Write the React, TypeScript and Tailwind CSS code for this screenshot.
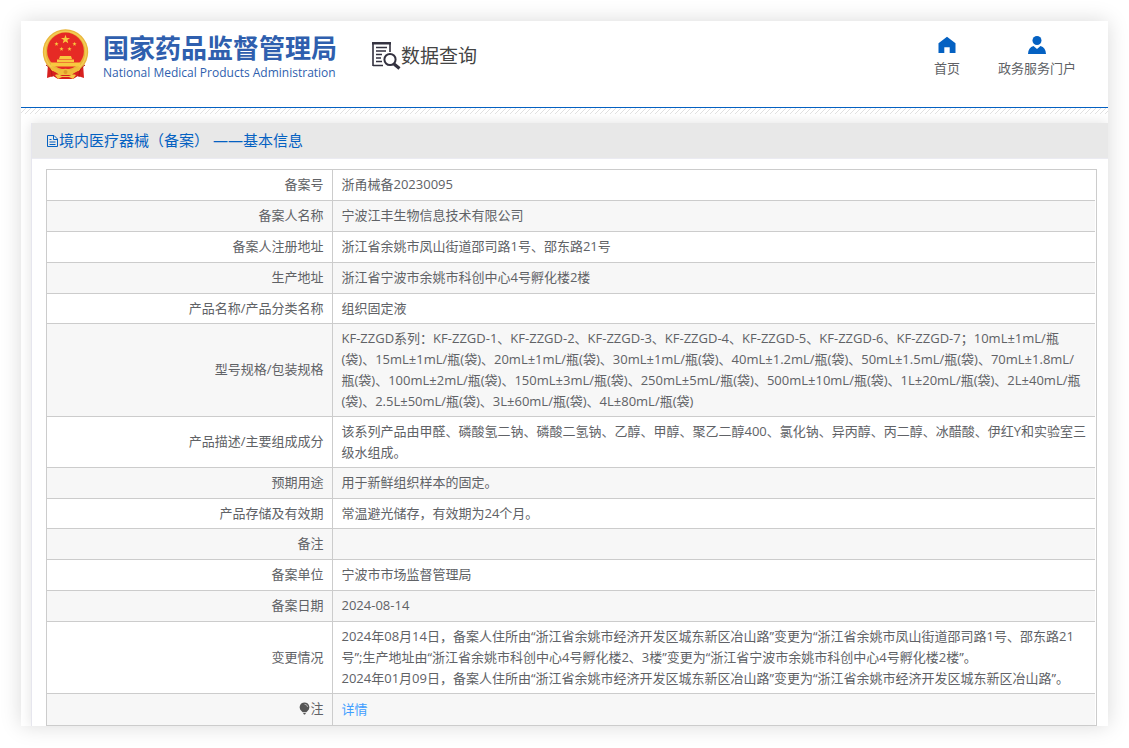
import type { ReactNode } from 'react'

type Row = {
  label: ReactNode
  lines: ReactNode[]
}

const rows: Row[] = [
  { label: '备案号', lines: ['浙甬械备20230095'] },
  { label: '备案人名称', lines: ['宁波江丰生物信息技术有限公司'] },
  { label: '备案人注册地址', lines: ['浙江省余姚市凤山街道邵司路1号、邵东路21号'] },
  { label: '生产地址', lines: ['浙江省宁波市余姚市科创中心4号孵化楼2楼'] },
  { label: '产品名称/产品分类名称', lines: ['组织固定液'] },
  {
    label: '型号规格/包装规格',
    lines: [
      'KF-ZZGD系列：KF-ZZGD-1、KF-ZZGD-2、KF-ZZGD-3、KF-ZZGD-4、KF-ZZGD-5、KF-ZZGD-6、KF-ZZGD-7；10mL±1mL/瓶',
      '(袋)、15mL±1mL/瓶(袋)、20mL±1mL/瓶(袋)、30mL±1mL/瓶(袋)、40mL±1.2mL/瓶(袋)、50mL±1.5mL/瓶(袋)、70mL±1.8mL/',
      '瓶(袋)、100mL±2mL/瓶(袋)、150mL±3mL/瓶(袋)、250mL±5mL/瓶(袋)、500mL±10mL/瓶(袋)、1L±20mL/瓶(袋)、2L±40mL/瓶',
      '(袋)、2.5L±50mL/瓶(袋)、3L±60mL/瓶(袋)、4L±80mL/瓶(袋)',
    ],
  },
  {
    label: '产品描述/主要组成成分',
    lines: [
      '该系列产品由甲醛、磷酸氢二钠、磷酸二氢钠、乙醇、甲醇、聚乙二醇400、氯化钠、异丙醇、丙二醇、冰醋酸、伊红Y和实验室三级水组成。',
    ],
  },
  { label: '预期用途', lines: ['用于新鲜组织样本的固定。'] },
  { label: '产品存储及有效期', lines: ['常温避光储存，有效期为24个月。'] },
  { label: '备注', lines: [''] },
  { label: '备案单位', lines: ['宁波市市场监督管理局'] },
  { label: '备案日期', lines: ['2024-08-14'] },
  {
    label: '变更情况',
    lines: [
      '2024年08月14日，备案人住所由“浙江省余姚市经济开发区城东新区冶山路”变更为“浙江省余姚市凤山街道邵司路1号、邵东路21',
      '号”;生产地址由“浙江省余姚市科创中心4号孵化楼2、3楼”变更为“浙江省宁波市余姚市科创中心4号孵化楼2楼”。',
      '2024年01月09日，备案人住所由“浙江省余姚市经济开发区城东新区冶山路”变更为“浙江省余姚市经济开发区城东新区冶山路”。',
    ],
  },
  {
    label: (
      <span className="inline-flex items-center">
        <NoteIcon />注
      </span>
    ),
    lines: [
      <a key="detail" href="#detail" className="text-[#409eff]">
        详情
      </a>,
    ],
  },
]

function Emblem() {
  const star = 'M0-5 1.2-1.6 4.8-1.5 1.9.6 2.9 4 0 2-2.9 4-1.9.6-4.8-1.5-1.2-1.6Z'
  return (
    <svg className="h-[51px] w-[47px] shrink-0" viewBox="0 0 47 51" aria-hidden="true">
      <path d="M6 35 5 49l6-2 5 3h15l5-3 6 2-1-14Z" fill="#d7201f" />
      <circle cx="23.5" cy="23" r="22.7" fill="#e9b53a" />
      <circle cx="23.5" cy="23" r="20.6" fill="none" stroke="#f3cb55" strokeWidth="1.6" />
      <circle cx="23.5" cy="22" r="18.4" fill="#e62a25" />
      <g fill="#f8c93f">
        <path d={star} transform="translate(23.5 10.5) scale(.95)" />
        <path d={star} transform="translate(14.5 15) scale(.45)" />
        <path d={star} transform="translate(32.5 15) scale(.45)" />
        <path d={star} transform="translate(19.5 20) scale(.45)" />
        <path d={star} transform="translate(27.5 20) scale(.45)" />
        <path d="M18 27h11l1 3H17ZM15 30.500h17v2.500H15ZM9 33.500h29v4H9Z" />
      </g>
      <path d="M7 38c5 0 8 1 11 4 2-3 9-3 11 0 3-3 6-4 11-4l-3 4c-4 0-5 2-7 4h-13c-2-2-3-4-7-4Z" fill="#f0bd3c" />
      <path d="M13 46c3-1 5 0 7 1h7c2-1 4-2 7-1l-3 4-4-2h-7l-4 2Z" fill="#f3c645" />
      <circle cx="23.5" cy="43" r="2" fill="#dd9a2c" />
      <path d="M4 36c4 3 6 5 6 12M43 36c-4 3-6 5-6 12" fill="none" stroke="#b51517" />
    </svg>
  )
}

function QueryIcon() {
  return (
    <svg className="h-[28px] w-[29px] shrink-0" viewBox="0 0 29 28" fill="none" stroke="#33313f" aria-hidden="true">
      <path d="M1 24V1h17v9M1 23.5h10" strokeWidth="1.6" />
      <path d="M0 1.3h19" strokeWidth="2.4" />
      <path d="M4 5.5h11M4 9h10M4 12.5h6M4 16h5M4 19.5h6" strokeWidth="1.5" />
      <circle cx="18" cy="17.5" r="5.6" strokeWidth="2" />
      <path d="m22 22 5.5 4.5" strokeWidth="3.2" />
    </svg>
  )
}

function HomeIcon() {
  return (
    <svg className="h-[18px] w-[18px]" viewBox="0 0 18 18" fill="#0461c2" aria-hidden="true">
      <path d="M9 .8.5 7.3V17h5.800v-5.800h5.400V17h5.800V7.300Z" />
    </svg>
  )
}

function UserIcon() {
  return (
    <svg className="h-[18px] w-[18px]" viewBox="0 0 18 18" fill="#0461c2" aria-hidden="true">
      <circle cx="9" cy="4.5" r="4.5" />
      <path d="M0 18c.2-4.500 2-7 5.500-8L9 13l3.500-3c3.500 1 5.300 3.500 5.500 8Z" />
    </svg>
  )
}

function DocIcon() {
  return (
    <svg className="h-[14px] w-[13px]" viewBox="0 0 13 14" fill="none" stroke="#0461c2" aria-hidden="true">
      <path d="M1.500 1.500h6.500l3.500 3.500v7.500h-10ZM7.500 1.500V5.500h4" />
      <path d="M3.500 5.500h2M3.500 8h6M3.500 10.500h6" />
    </svg>
  )
}

function NoteIcon() {
  return (
    <svg className="h-[13px] w-[11px]" viewBox="0 0 11 13" fill="#555" aria-hidden="true">
      <path d="M5.500.5a4.800 4.800 0 0 1 2.800 8.700l-1 1H3.700l-1-1A4.800 4.800 0 0 1 5.500.5Z" />
      <path d="M4 11h3l-1 1.500H5Z" />
      <path d="M5.500 2.300A3 3 0 0 1 8.600 5" fill="none" stroke="#ccc" strokeWidth=".8" />
    </svg>
  )
}

function Hatching() {
  return (
    <svg className="block h-[6px] w-full" aria-hidden="true">
      <defs>
        <pattern id="hatch" width="5" height="6" patternUnits="userSpaceOnUse">
          <path d="M-1 6 5 0M-6 6 0 0M4 6 10 0" stroke="#d8d8d8" strokeWidth=".8" />
        </pattern>
      </defs>
      <rect width="100%" height="6" fill="url(#hatch)" />
    </svg>
  )
}

function Header() {
  return (
    <header className="flex h-[87px] items-start justify-between border-b border-[#0461c2] pr-8 pl-[21px]">
      <div className="flex items-start">
        <a href="#home" className="flex items-start gap-[14px] pt-2 text-[#2f5fae]">
          <Emblem />
          <span className="flex flex-col pt-1">
            <span className="text-[26px] leading-[31px] font-bold">国家药品监督管理局</span>
            <span className="text-[12px] leading-[18px] font-medium">National Medical Products Administration</span>
          </span>
        </a>
        <h1 className="ml-[35px] flex items-center pt-[21px] text-[19px] leading-[28px] text-[#444]">
          <QueryIcon />
          数据查询
        </h1>
      </div>
      <nav className="flex gap-[38px] pt-[15px] text-[13px] leading-5">
        <a href="#home" className="flex flex-col items-center gap-1">
          <HomeIcon />
          首页
        </a>
        <a href="#portal" className="flex flex-col items-center gap-1">
          <UserIcon />
          政务服务门户
        </a>
      </nav>
    </header>
  )
}

export default function App() {
  return (
    <div className="bg-white p-[21px] font-['Open_Sans','Noto_Sans_CJK_SC',sans-serif] text-[#606266]">
      <main className="overflow-hidden bg-white shadow-[0_0_20px_rgba(0,0,0,0.15)]">
        <Header />
        <Hatching />
        <section className="mt-[9px] ml-[10px] border-l border-[#e6e6ee] shadow-[0_0_12px_rgba(0,0,0,0.12)]">
          <h2 className="flex h-[36px] items-center border-b border-[#ebebf2] bg-[#e8e8e8] pl-[14px] text-[15px] text-[#0461c2]">
            <DocIcon />
            境内医疗器械（备案） ——基本信息
          </h2>
          <div className="bg-white pt-[10px] pr-[11px] pl-[14px]">
            <div className="border border-[#ccc] pr-px">
              <table className="w-full border-collapse text-[13px] leading-[21px]">
                <tbody>
                  {rows.map((row, i) => (
                    <tr
                      key={i}
                      className="h-[31px] border-b border-[#ccc] last:border-b-0 even:bg-[#f7f7f7] nth-[4n+1]:h-[30px]"
                    >
                      <th scope="row" className="w-[285px] border-r border-[#ccc] px-2 py-1 text-right font-normal">
                        {row.label}
                      </th>
                      <td className="py-1 pl-[9px]">
                        {row.lines.map((line, n) => (
                          <div key={n}>{line}</div>
                        ))}
                      </td>
                    </tr>
                  ))}
                </tbody>
              </table>
            </div>
          </div>
        </section>
      </main>
    </div>
  )
}
